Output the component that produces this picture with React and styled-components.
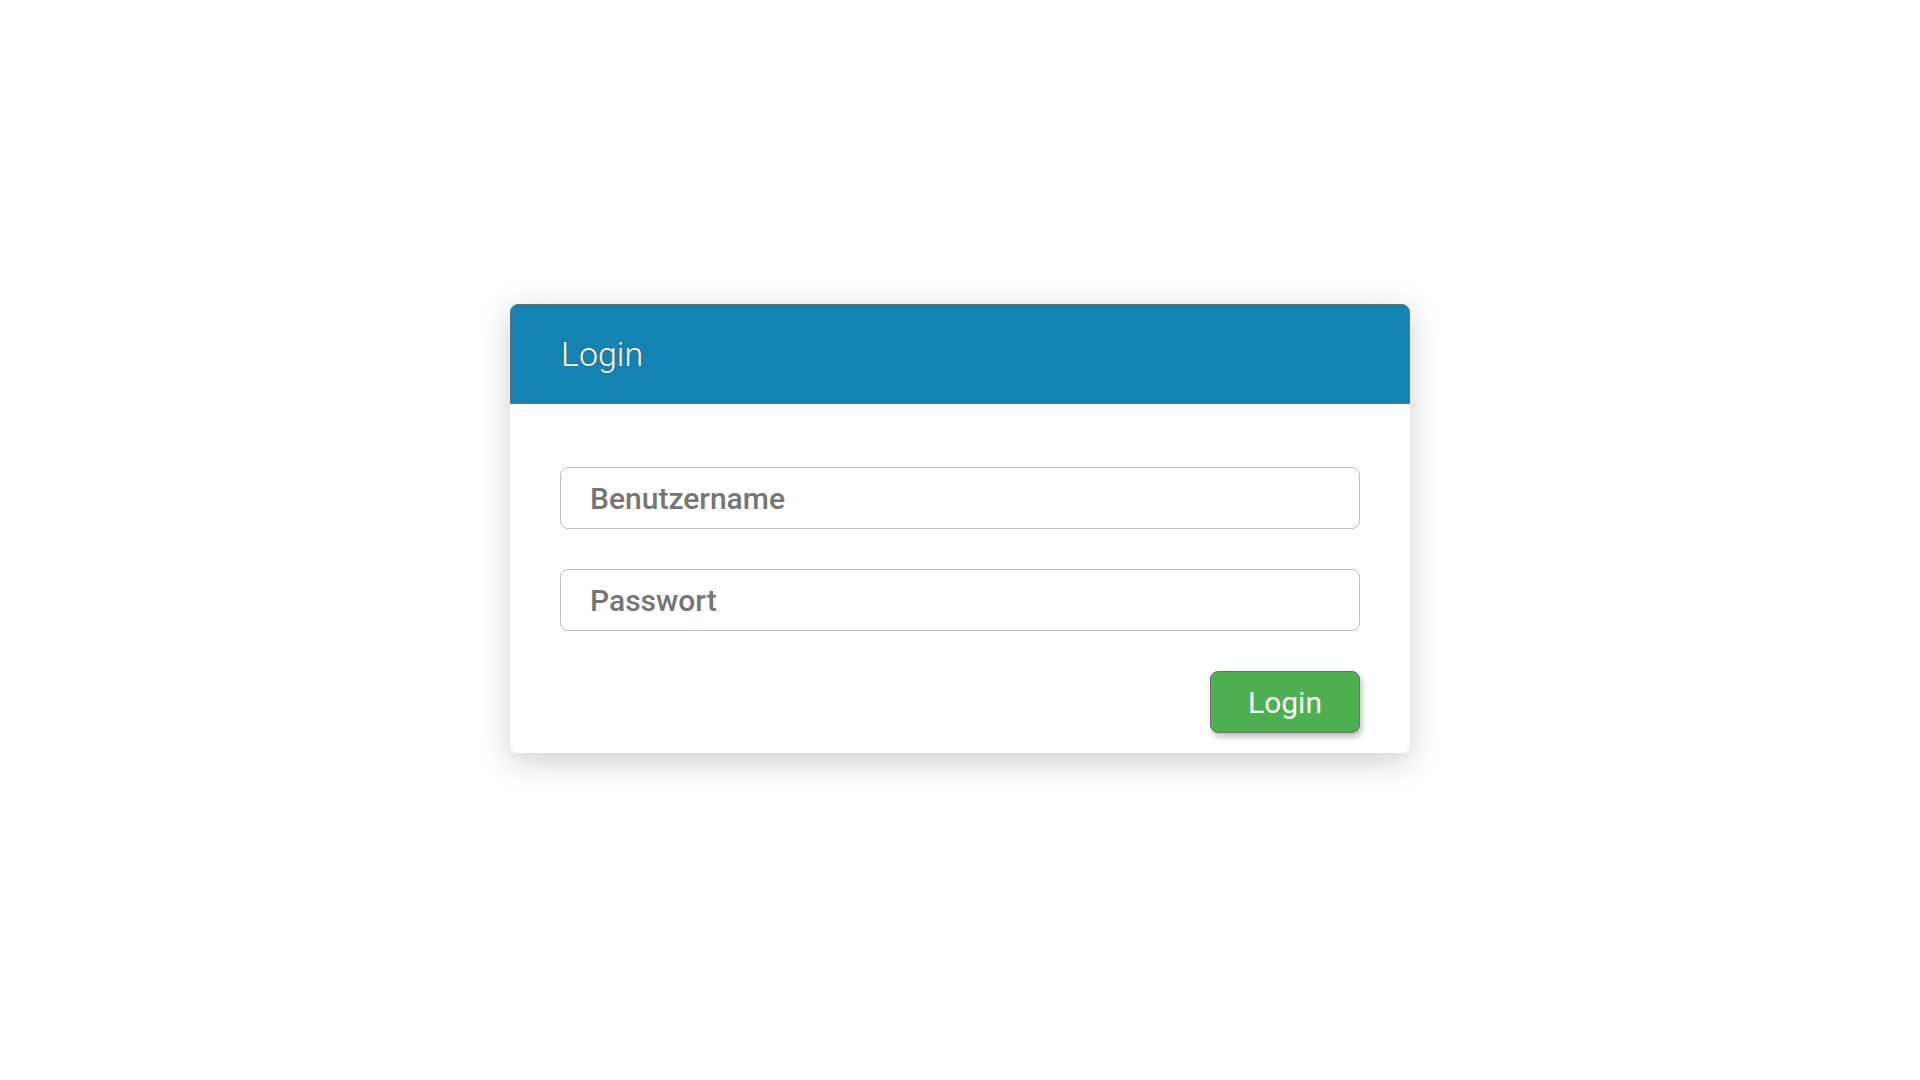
import styled, { createGlobalStyle } from "styled-components";

const GlobalStyle = createGlobalStyle`
    html, body {
        margin: 0;
        padding: 0;
        background: #ffffff;
        font-family: Roboto, "Liberation Sans", sans-serif;
    }
`;

const Page = styled.div`
    display: flex;
    justify-content: center;
    padding-top: 304px;
    min-height: 1080px;
    box-sizing: border-box;
`;

const Card = styled.div`
    width: 900px;
    background: #ffffff;
    border-radius: 8px;
    box-shadow: 0 8px 32px rgba(0, 0, 0, 0.2);
    align-self: flex-start;
`;

const CardHeader = styled.div`
    height: 100px;
    box-sizing: border-box;
    display: flex;
    align-items: center;
    padding-left: 50px;
    background: #1383b4;
    border: 1px solid #6f6f6f;
    border-radius: 8px 8px 0 0;
`;

const Title = styled.h1`
    margin: 0;
    font-size: 34px;
    font-weight: 300;
    color: #ffffff;
    text-shadow: 0 0 1px #555, 0 0 1px #555;
`;

const Form = styled.form`
    display: flex;
    flex-direction: column;
    gap: 40px;
    padding: 63px 50px 20px;
`;

const Input = styled.input`
    height: 62px;
    box-sizing: border-box;
    padding: 0 29px;
    border: 1px solid #bdbdbd;
    border-radius: 8px;
    font-family: Roboto, "Liberation Sans", sans-serif;
    font-size: 30px;
    font-weight: 500;
    color: #757575;
    outline: none;

    &::placeholder {
        color: #757575;
    }
`;

const Actions = styled.div`
    display: flex;
    justify-content: flex-end;
`;

const Button = styled.button`
    width: 150px;
    height: 62px;
    background: #4caf50;
    border: 1px solid #6f6f6f;
    border-radius: 8px;
    box-shadow: 2px 4px 6px rgba(0, 0, 0, 0.25);
    font-family: Roboto, "Liberation Sans", sans-serif;
    font-size: 30px;
    color: #ffffff;
    cursor: pointer;
`;

const App = () => {
    return (
        <>
            <GlobalStyle />
            <Page>
                <Card>
                    <CardHeader>
                        <Title>Login</Title>
                    </CardHeader>
                    <Form onSubmit={(e) => e.preventDefault()}>
                        <Input type="text" placeholder="Benutzername" />
                        <Input type="password" placeholder="Passwort" />
                        <Actions>
                            <Button type="submit">Login</Button>
                        </Actions>
                    </Form>
                </Card>
            </Page>
        </>
    );
};

export default App;
